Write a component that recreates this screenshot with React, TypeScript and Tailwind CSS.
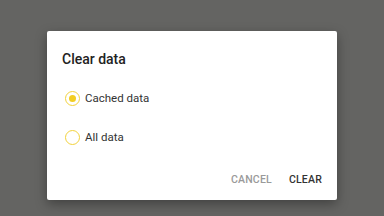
import { useState } from 'react';

type Choice = 'cached' | 'all';

const options: { id: Choice; label: string }[] = [
  { id: 'cached', label: 'Cached data' },
  { id: 'all', label: 'All data' },
];

function Radio({ checked }: { checked: boolean }) {
  return (
    <span className="flex h-[15px] w-[15px] items-center justify-center rounded-full border-[1.5px] border-[#f2d23c]">
      {checked && <span className="h-[7px] w-[7px] rounded-full bg-[#f2cd22]" />}
    </span>
  );
}

export default function App() {
  const [choice, setChoice] = useState<Choice>('cached');

  return (
    <div
      className="flex h-[216px] w-[384px] justify-center bg-[#646462] pt-[31px]"
      style={{ fontFamily: 'Roboto, "Liberation Sans", sans-serif' }}
    >
      <div className="flex h-[169px] w-[290px] flex-col rounded-[2px] bg-white shadow-[0_4px_12px_rgba(0,0,0,0.35)]">
        <h2 className="pl-[15px] pt-[18px] text-[14px] font-medium leading-[20px] text-[#222]">Clear data</h2>
        <div className="mt-[19px] flex flex-col gap-[19px] pl-[18px]">
          {options.map((o) => (
            <button
              key={o.id}
              onClick={() => setChoice(o.id)}
              className="flex h-[20px] items-center gap-[5px] text-left"
            >
              <Radio checked={choice === o.id} />
              <span className="text-[11.5px] leading-[20px] text-[#333]">{o.label}</span>
            </button>
          ))}
        </div>
        <div className="mt-auto flex justify-end gap-[17px] pb-[12px] pr-[15px]">
          <button className="text-[10.5px] font-medium uppercase tracking-[0.02em] text-[#9a9a9a]">Cancel</button>
          <button className="text-[10.5px] font-medium uppercase tracking-[0.02em] text-[#333]">Clear</button>
        </div>
      </div>
    </div>
  );
}
